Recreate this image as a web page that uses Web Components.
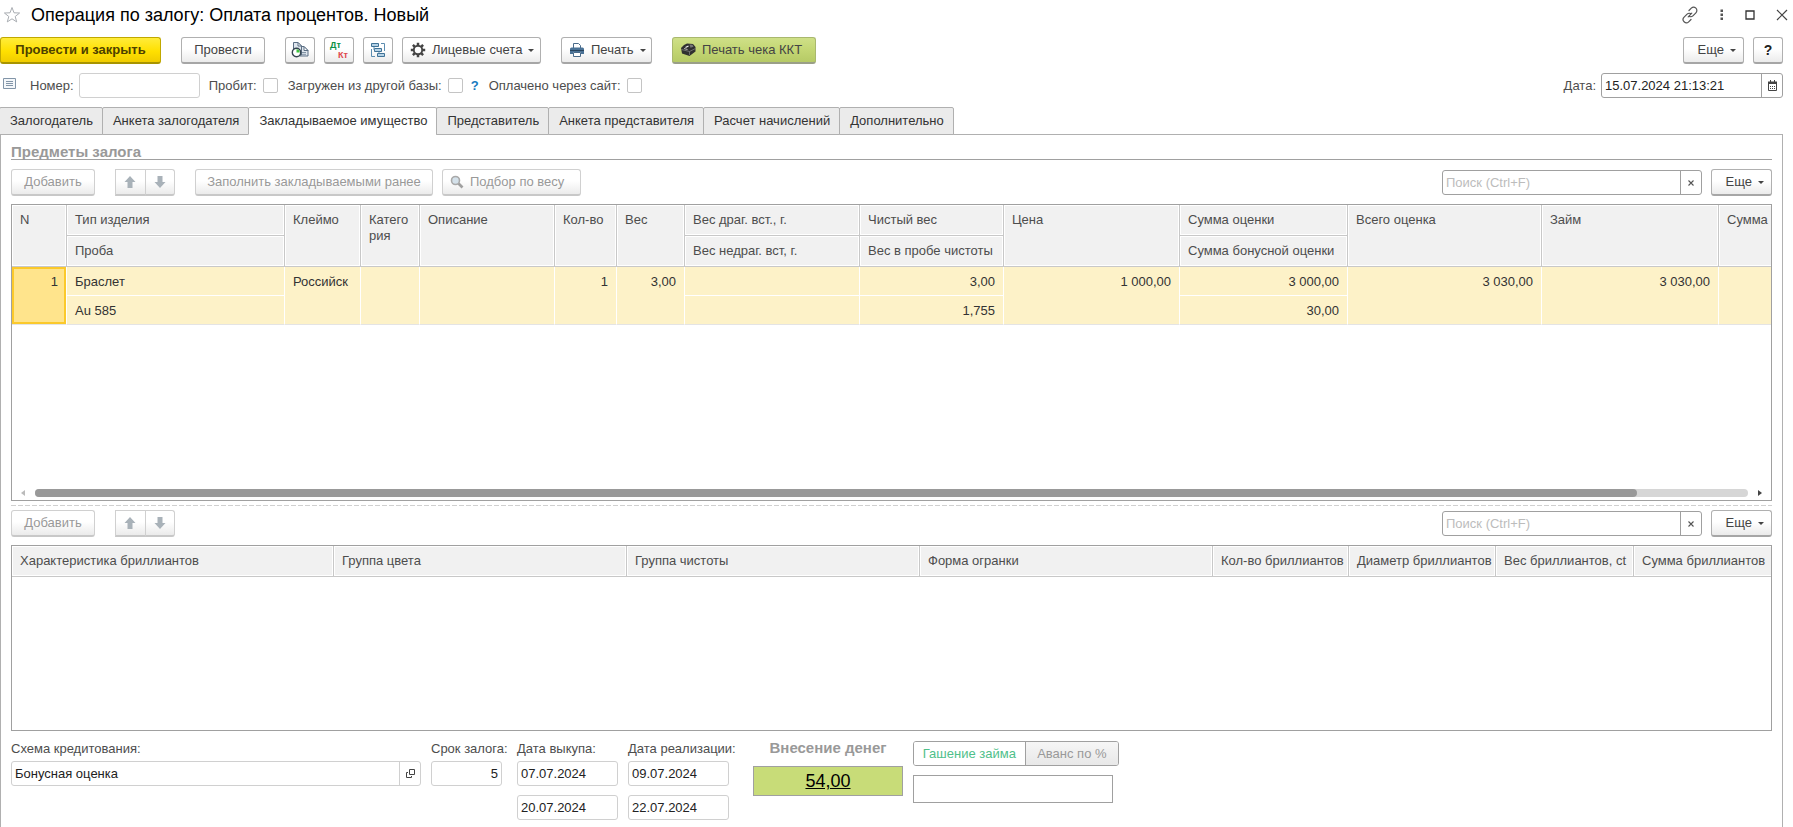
<!DOCTYPE html>
<html lang="ru">
<head>
<meta charset="utf-8">
<title>Операция по залогу: Оплата процентов. Новый</title>
<style>
html, body { margin: 0; height: 100%; }
body {
  font: 13px/16px "Liberation Sans", Arial, sans-serif;
  color: #333;
  background: #fff;
  --line: #a0a0a0;
  --soft: #d0d0d0;
  --label: #4d4d4d;
  --head: #f1f1f1;
  --sel: #fdf2c8;
}
</style>
</head>
<body>
<pledge-window></pledge-window>

<script>
const ICONS = {
  star: '<svg width="18" height="17" viewBox="0 0 18 17"><path d="M9 1.5l2 5.3 5.6.2-4.4 3.5 1.5 5.4L9 12.8l-4.7 3.1 1.5-5.4L1.4 7 7 6.800z" fill="none" stroke="#a9adb2" stroke-width="1"/></svg>',
  link: '<svg width="18" height="18" viewBox="0 0 18 18"><g fill="none" stroke="#555" stroke-width="1.200" stroke-linecap="round"><path d="M8 4.500l2.300-2.300a3.200 3.200 0 0 1 4.600 4.600l-3 3a3.200 3.200 0 0 1-3.600.6"/><path d="M10 13.500l-2.300 2.300a3.200 3.200 0 0 1-4.600-4.600l3-3a3.200 3.200 0 0 1 3.600-.6"/><path d="M7.200 10.800l3.600-3.600"/></g></svg>',
  dots: '<svg width="4" height="12" viewBox="0 0 4 12"><path d="M.5 0.500h2.500v2.500h-2.500zM.5 4.500h2.500v2.500h-2.500zM.5 8.500h2.500v2.500h-2.500z" fill="#555"/></svg>',
  max: '<svg width="10" height="10" viewBox="0 0 10 10"><path d="M1 1h8v8H1z" fill="none" stroke="#333" stroke-width="1.300"/></svg>',
  close: '<svg width="12" height="12" viewBox="0 0 12 12"><path d="M1 1l10 10M11 1L1 11" stroke="#444" stroke-width="1.200"/></svg>',
  report: '<svg width="18" height="18" viewBox="0 0 18 18"><path d="M8.500 5.500h4.500l4 4v5.500H8.500z" fill="#dfe6ee" stroke="#5b6f84"/><path d="M13 5.500v4h4z" fill="#fff" stroke="#5b6f84"/><path d="M11 11.500h4M11 13.300h4" stroke="#8294a5"/><path d="M2.500 1.500h4.500l3.500 3.500v9h-8z" fill="#dfe6ee" stroke="#5b6f84"/><path d="M7 1.500V5h3.500z" fill="#fff" stroke="#5b6f84"/><circle cx="5.500" cy="11.500" r="4.200" fill="#fff" stroke="#34434f" stroke-width="1.400"/><path d="M5.500 11.500V8.300A3.200 3.200 0 0 1 8.700 11.500z" fill="#3cc43c"/></svg>',
  flow: '<svg width="16" height="16" viewBox="0 0 16 16"><path d="M1.500 1.500h7v3h-7zM4.500 6.500h7v3h-7zM7.500 11.500h7v3h-7z" fill="#b5d2e6" stroke="#3f7296"/><path d="M4 5v3h.5M9 10v1.500M11 1.500h3.500V9M1.500 7v7.500H5" fill="none" stroke="#5c8db0"/></svg>',
  gear: '<svg width="16" height="16" viewBox="0 0 16 16"><circle cx="8" cy="8" r="4.200" fill="none" stroke="#444" stroke-width="1.900"/><path d="M8 .8v2.700M8 12.500v2.700M.8 8h2.700M12.500 8h2.700M2.900 2.900l1.900 1.900M11.200 11.200l1.900 1.900M2.900 13.100l1.900-1.900M11.200 4.800l1.900-1.900" stroke="#444" stroke-width="2.500"/></svg>',
  print: '<svg width="16" height="16" viewBox="0 0 16 16"><path d="M4.500 6V1.500h5l2 2V6" fill="#fff" stroke="#4a6b8a"/><path d="M2.500 5.500h11A1.500 1.500 0 0 1 15 7v5h-3v-2H4v2H1V7a1.500 1.500 0 0 1 1.500-1.500z" fill="#4a7296"/><path d="M1 8.500h14" stroke="#27435c"/><path d="M4.500 10.500h7v4h-7z" fill="#fff" stroke="#4a6b8a"/></svg>',
  kkt: '<svg width="16" height="14" viewBox="0 0 16 14"><path d="M1 5l3-3 3-1.500 6 .5 2.500 3v4.500L9.500 13 2 10.500z" fill="#303030"/><path d="M9.500 1.500l3 .3 1 2-3 1z" fill="#777"/><path d="M5.500 4.500l3-1.500" stroke="#f2f2f2" stroke-width="1.200"/><path d="M1.500 6.500l8 2V12M9.500 8.500l6-3" fill="none" stroke="#888" stroke-width=".7"/><path d="M4 5.500l3.500 1" stroke="#bbb"/></svg>',
  up: '<svg width="12" height="12" viewBox="0 0 12 12"><path d="M6 0l5.500 6H8.500v6h-5V6H.5z" fill="#a9b2b9"/></svg>',
  down: '<svg width="12" height="12" viewBox="0 0 12 12"><path d="M6 12l5.500-6H8.500V0h-5v6H.5z" fill="#a9b2b9"/></svg>',
  lens: '<svg width="14" height="14" viewBox="0 0 14 14"><path d="M8.500 8.500l4 4" stroke="#a0a0a0" stroke-width="2.600"/><circle cx="5.500" cy="5.500" r="4" fill="#d4e1ea" stroke="#a9a9a9" stroke-width="1.600"/></svg>',
  list: '<svg width="13" height="11" viewBox="0 0 13 11"><path d="M.5.500h12v10H.5z" fill="#f4f7fa" stroke="#8295a8"/><path d="M3 3.500h7M3 5.500h7M3 7.500h7" stroke="#8295a8"/></svg>',
  calendar: '<svg width="9" height="11" viewBox="0 0 9 11"><path d="M.5 2.500h8v8H.5z" fill="#fff" stroke="#444"/><path d="M0 1.500h9V4H0z" fill="#444"/><path d="M2.500 0v2M6.500 0v2" stroke="#444"/><path d="M2 6.500h5M2 8.500h5" stroke="#444" stroke-dasharray="1 1"/></svg>',
  open: '<svg width="9" height="9" viewBox="0 0 9 9"><path d="M3.500.5h5v5h-5z" fill="none" stroke="#444"/><path d="M2 3.500H.5v5h5V7" fill="none" stroke="#444"/></svg>',
  clear: '<svg width="6" height="6" viewBox="0 0 6 6"><path d="M.5.500l5 5M5.500.500l-5 5" stroke="#555" stroke-width="1.100"/></svg>',
  caret: '<svg width="6" height="3" viewBox="0 0 6 3"><path d="M0 0h6L3 3z" fill="#444"/></svg>'
};

class Base extends HTMLElement {
  connectedCallback() {
    if (this.shadowRoot) return;
    const root = this.attachShadow({ mode: 'open' });
    root.innerHTML = `<style>*{box-sizing:border-box}svg{display:block;flex:none}${this.css()}</style>${this.html()}`;
  }
  at(name, fallback = '') { return this.getAttribute(name) ?? fallback; }
  css() { return ''; }
  html() { return '<slot></slot>'; }
}

/* Command button: kind = main | green | icon, optional icon and menu caret */
class CmdButton extends Base {
  css() { return `
    :host { display: block; flex: none; }
    button { display: flex; align-items: center; justify-content: center; width: 100%; height: 27px; padding: 0 7px; gap: 6px;
      font: inherit; font-size: 13px; color: #444; white-space: nowrap; border: 1px solid #b0b0b0; border-bottom: 2px solid #a6a6a6;
      border-radius: 3px; background: linear-gradient(#fff 45%, #ebebeb); }
    :host([icon]) button:not(.icon) { justify-content: flex-start; }
    :host([menu]:not([icon])) button { justify-content: flex-end; }
    button:disabled { color: #999; border-color: #d0d0d0; border-bottom-color: #c8c8c8; }
    .main { font-weight: bold; color: #4d4000; border-color: #c0a800; border-bottom-color: #a89400; background: linear-gradient(#ffec3a, #ffe000 55%, #f0cc00); }
    .green { border-color: #a9b86e; border-bottom-color: #9a9f88; background: linear-gradient(#cfe088, #c3d673 50%, #b6ca66); }
    .icon { padding: 0; }
    .strong { font-weight: bold; font-size: 14px; color: #222; }
    .dk { display: grid; font: bold 9px/10px "Liberation Sans", sans-serif; text-align: left; width: 18px; }
    .dk i { font-style: normal; color: #0a9146; } .dk b { color: #e0474c; text-align: right; }`; }
  html() {
    const icon = this.at('icon'), kind = this.at('kind'), label = this.at('label');
    const body = kind === 'icon dt' ? '<span class="dk"><i>Дт</i><b>Кт</b></span>' : label ? '' : '<slot></slot>';
    return `<button type="button" class="${kind}" ${this.hasAttribute('disabled') ? 'disabled' : ''} ${label ? `aria-label="${label}"` : ''}>${icon ? ICONS[icon] : ''}${body}${this.hasAttribute('menu') ? `<span>${ICONS.caret}</span>` : ''}</button>`;
  }
}

/* Pair of joined buttons that move a row up or down */
class MoveButtons extends Base {
  css() { return `
    :host { display: flex; flex: none; width: 60px; }
    button { flex: 1; display: grid; place-items: center; height: 27px; padding: 0; border: 1px solid #d0d0d0; border-bottom: 2px solid #c8c8c8; background: linear-gradient(#fff 45%, #ebebeb); }
    button:first-child { border-radius: 3px 0 0 3px; } button:last-child { border-radius: 0 3px 3px 0; border-left: 0; }`; }
  html() { return `<button disabled aria-label="Вверх">${ICONS.up}</button><button disabled aria-label="Вниз">${ICONS.down}</button>`; }
}

/* Labelled text box with an optional trailing button */
class TextField extends Base {
  css() { return `
    :host { display: flex; align-items: center; gap: 5px; flex: none; }
    :host([stacked]) { flex-direction: column; align-items: stretch; gap: 4px; }
    label { color: var(--label); white-space: nowrap; }
    .box { display: flex; flex: 1; width: var(--w, 100%); height: 25px; border: 1px solid var(--bd, var(--soft)); border-radius: 3px; background: #fff; overflow: hidden; }
    :host([stacked]) .box { flex: none; }
    :host([strong]) .box { --bd: var(--line); }
    :host([tall]) .box { height: 28px; border-radius: 0; }
    input { flex: 1; min-width: 0; width: 0; border: 0; outline: 0; padding: 0 3px; font: inherit; color: #222; background: none; text-align: var(--align, left); }
    input::placeholder { color: #bcbcbc; opacity: 1; }
    button { display: grid; place-items: center; flex: none; width: 21px; padding: 0; border: 0; border-left: 1px solid var(--bd, var(--soft)); background: none; }`; }
  html() {
    const l = this.at('label'), b = this.at('button');
    return `${l ? `<label for="f">${l}</label>` : ''}<div class="box"><input id="f" type="text" value="${this.at('value')}" placeholder="${this.at('placeholder')}" ${l ? '' : `aria-label="${this.at('name', this.at('placeholder'))}"`}>
      ${b ? `<button type="button" aria-label="${this.at('action')}">${ICONS[b]}</button>` : ''}</div>`.replace(' placeholder=""', '');
  }
}

class CheckField extends Base {
  css() { return `
    :host { display: flex; align-items: center; gap: 6px; flex: none; }
    label { color: var(--label); white-space: nowrap; }
    input { appearance: none; width: 15px; height: 15px; margin: 0; border: 1px solid #c4c4c4; border-radius: 2px; background: #fff; }
    a { color: #1a7bbf; text-decoration: none; font-weight: bold; margin-left: 2px; }`; }
  html() { return `<label for="c">${this.at('label')}</label><input id="c" type="checkbox">${this.hasAttribute('help') ? '<a href="#help">?</a>' : ''}`; }
}

class TabBar extends Base {
  css() { return `
    :host { display: flex; position: relative; z-index: 1; margin-bottom: -1px; }
    button { height: 28px; padding: 0 9px 0 10px; margin-left: -1px; font: inherit; color: #333; border: 1px solid #b0b0b0; border-radius: 2px 2px 0 0; background: #ebebeb; white-space: nowrap; }
    button:first-child { margin-left: 0; }
    button[aria-selected=true] { background: #fff; border-bottom-color: #fff; }`; }
  html() { return `${this.at('tabs').split('|').map((t, i) => `<button type="button" role="tab" aria-selected="${i === +this.at('active')}">${t}</button>`).join('')}`; }
}

class CommandRow extends Base {
  css() { return `
    :host { display: flex; align-items: center; }
    .side { display: flex; align-items: center; gap: 9px; margin-left: auto; }`; }
  html() { return '<slot></slot><div class="side"><slot name="end"></slot></div>'; }
}

/* Horizontal scroll strip under a wide grid */
class ScrollStrip extends Base {
  css() { return `
    :host { display: flex; align-items: center; gap: 10px; height: 14px; padding: 0 9px; }
    .track { flex: 1; height: 8px; border-radius: 4px; background: #d6d6d6; }
    .thumb { width: 93.500%; height: 8px; border-radius: 4px; background: #999; }`; }
  html() { return `<svg width="4" height="6" viewBox="0 0 4 6"><path d="M4 0v6L0 3z" fill="#bbb"/></svg><div class="track"><div class="thumb"></div></div><svg width="4" height="6" viewBox="0 0 4 6"><path d="M0 0v6l4-3z" fill="#444"/></svg>`; }
}

const GRID_CSS = `
  :host { display: flex; flex-direction: column; border: 1px solid var(--line); overflow: hidden; background: #fff; }
  .view { flex: 1; overflow: hidden; min-height: 0; }
  table { border-collapse: separate; border-spacing: 0; table-layout: fixed; }
  th { height: 31px; padding: 7px 4px 0 8px; font-weight: normal; text-align: left; vertical-align: top; color: var(--label); background: var(--head);
    border-right: 1px solid #c8c8c8; border-bottom: 1px solid #c8c8c8; box-shadow: inset 0 0 0 1px #fff; white-space: nowrap; }
  td { height: 29px; padding: 7px 8px 0; vertical-align: top; background: var(--sel); border-right: 1px solid #fff; border-bottom: 1px solid #fff; white-space: nowrap; overflow: hidden; color: #333; }`;

class ItemsGrid extends Base {
  css() { return GRID_CSS + `
    table { width: 1884px; }
    .n { text-align: right; }
    .cur { background: #ffe48c; box-shadow: inset 0 0 0 2px #fbc92b; }
    td[rowspan], tr:last-child td { border-bottom-color: #e4e4e4; }`; }
  html() {
    const cols = [55, 218, 76, 59, 135, 62, 68, 175, 144, 176, 168, 194, 177];
    return `<div class="view"><table><colgroup>${cols.map(w => `<col style="width:${w}px">`).join('')}<col></colgroup>
      <thead><tr><th rowspan="2">N</th><th>Тип изделия</th><th rowspan="2">Клеймо</th><th rowspan="2">Катего<br>рия</th><th rowspan="2">Описание</th><th rowspan="2">Кол-во</th><th rowspan="2">Вес</th><th>Вес драг. вст., г.</th><th>Чистый вес</th><th rowspan="2">Цена</th><th>Сумма оценки</th><th rowspan="2">Всего оценка</th><th rowspan="2">Займ</th><th rowspan="2">Сумма</th></tr>
      <tr><th>Проба</th><th>Вес недраг. вст, г.</th><th>Вес в пробе чистоты</th><th>Сумма бонусной оценки</th></tr></thead>
      <tbody><tr><td rowspan="2" class="n cur">1</td><td>Браслет</td><td rowspan="2">Российск</td><td rowspan="2"></td><td rowspan="2"></td><td rowspan="2" class="n">1</td><td rowspan="2" class="n">3,00</td><td></td><td class="n">3,00</td><td rowspan="2" class="n">1 000,00</td><td class="n">3 000,00</td><td rowspan="2" class="n">3 030,00</td><td rowspan="2" class="n">3 030,00</td><td rowspan="2"></td></tr>
      <tr><td>Au 585</td><td></td><td class="n">1,755</td><td class="n">30,00</td></tr></tbody></table></div><scroll-strip></scroll-strip>`;
  }
}

class StonesGrid extends Base {
  css() { return GRID_CSS + `table { width: 100%; } th:last-child { border-right: 0; }`; }
  html() {
    const cols = [322, 293, 293, 293, 136, 147, 138, 138];
    const names = ['Характеристика бриллиантов', 'Группа цвета', 'Группа чистоты', 'Форма огранки', 'Кол-во бриллиантов', 'Диаметр бриллиантов', 'Вес бриллиантов, ct', 'Сумма бриллиантов'];
    return `<div class="view"><table><colgroup>${cols.map(w => `<col style="width:${w}px">`).join('')}</colgroup><thead><tr>${names.map(n => `<th>${n}</th>`).join('')}</tr></thead></table></div>`;
  }
}

class PaymentMode extends Base {
  css() { return `
    :host { display: flex; position: relative; height: 25px; border: 1px solid var(--line); border-radius: 3px; overflow: hidden; box-sizing: border-box; }
    input { position: absolute; opacity: 0; pointer-events: none; }
    label { display: grid; place-items: center; flex: 5 1 0; color: #999; background: linear-gradient(#f6f6f6, #e8e8e8); white-space: nowrap; }
    input:checked + label { color: #4fc08a; background: #fff; border-right: 1px solid var(--line); flex-grow: 6; }`; }
  html() { return `<input type="radio" name="m" id="a" checked><label for="a">Гашение займа</label><input type="radio" name="m" id="b"><label for="b">Аванс по %</label>`; }
}

class PledgeWindow extends Base {
  css() { return `
    :host { display: flex; flex-direction: column; min-height: 100vh; box-sizing: border-box; }
    header { display: flex; align-items: center; height: 29px; padding: 0 5px 0 3px; }
    h1 { margin: 0 auto 0 10px; font-size: 18px; line-height: 24px; font-weight: normal; color: #000; }
    .tools { display: flex; align-items: center; gap: 21px; }
    .tool { display: grid; place-items: center; padding: 0; border: 0; background: none; }
    .bar { margin: 8px 10px 0 0; }
    .g20 { margin-left: 20px; } .g9 { margin-left: 9px; }
    .fields { margin: 9px 10px 9px 0; }
    main { flex: 1; display: flex; flex-direction: column; margin-right: 10px; padding: 10px 10px 7px 10px; border: 1px solid #b0b0b0; border-bottom: 0; }
    h2 { margin: 0; font-size: 15px; line-height: 14px; font-weight: bold; color: #999; }
    .rule { border-bottom: 1px solid var(--line); margin-bottom: 9px; }
    items-grid { height: 297px; margin-top: 8px; }
    .split { height: 1px; background: repeating-linear-gradient(90deg, #d0d0d0 0 5px, #fff 5px 7px); margin: 4px 0; }
    stones-grid { flex: 1; min-height: 100px; margin-top: 8px; }
    .foot { display: flex; align-items: flex-start; margin-top: 10px; }
    .foot > * { flex: none; }
    .dates { display: grid; grid-template-columns: minmax(0, 1fr); gap: 9px; width: 101px; margin-right: 10px; }
    .money { width: 150px; margin-left: 14px; text-align: center; }
    .money a { display: block; margin-top: 11px; height: 30px; font-size: 18px; line-height: 28px; color: #000; background: #c8dc78; border: 1px solid #a0a0a0; box-sizing: border-box; }
    .money h2 { line-height: 14px; }
    .mode { width: 206px; margin-left: 10px; display: grid; gap: 9px; }`; }
  html() { return `
    <header>${ICONS.star}<h1>Операция по залогу: Оплата процентов. Новый</h1>
      <div class="tools"><button class="tool" aria-label="Ссылка">${ICONS.link}</button><button class="tool" aria-label="Меню">${ICONS.dots}</button><button class="tool" aria-label="Развернуть">${ICONS.max}</button><button class="tool" aria-label="Закрыть">${ICONS.close}</button></div></header>
    <command-row class="bar">
      <cmd-button kind="main" style="width:161px">Провести и закрыть</cmd-button>
      <cmd-button class="g20" style="width:84px">Провести</cmd-button>
      <cmd-button class="g20" kind="icon" icon="report" label="Отчеты" style="width:30px"></cmd-button>
      <cmd-button class="g9" kind="icon dt" style="width:30px"></cmd-button>
      <cmd-button class="g9" kind="icon" icon="flow" label="Структура подчиненности" style="width:30px"></cmd-button>
      <cmd-button class="g9" icon="gear" menu style="width:139px">Лицевые счета</cmd-button>
      <cmd-button class="g20" icon="print" menu style="width:91px">Печать</cmd-button>
      <cmd-button class="g20" kind="green" icon="kkt" style="width:144px">Печать чека ККТ</cmd-button>
      <cmd-button slot="end" menu style="width:61px">Еще</cmd-button>
      <cmd-button slot="end" kind="strong" style="width:30px">?</cmd-button>
    </command-row>
    <command-row class="fields">
      <span style="margin:0 14px 5px 3px">${ICONS.list}</span>
      <text-field label="Номер:" style="--w:121px"></text-field>
      <check-field label="Пробит:" style="margin-left:9px"></check-field>
      <check-field label="Загружен из другой базы:" help style="margin-left:10px"></check-field>
      <check-field label="Оплачено через сайт:" style="margin-left:10px"></check-field>
      <text-field slot="end" strong label="Дата:" value="15.07.2024 21:13:21" button="calendar" action="Выбрать дату" style="--w:182px"></text-field>
    </command-row>
    <tab-bar active="2" tabs="Залогодатель|Анкета залогодателя|Закладываемое имущество|Представитель|Анкета представителя|Расчет начислений|Дополнительно"></tab-bar>
    <main>
      <h2 class="rule">Предметы залога</h2>
      <command-row>
        <cmd-button disabled style="width:84px">Добавить</cmd-button>
        <move-buttons class="g20"></move-buttons>
        <cmd-button class="g20" disabled style="width:238px">Заполнить закладываемыми ранее</cmd-button>
        <cmd-button class="g9" disabled icon="lens" style="width:139px">Подбор по весу</cmd-button>
        <text-field slot="end" strong placeholder="Поиск (Ctrl+F)" button="clear" action="Очистить" style="--w:260px"></text-field>
        <cmd-button slot="end" menu style="width:61px">Еще</cmd-button>
      </command-row>
      <items-grid></items-grid>
      <div class="split"></div>
      <command-row>
        <cmd-button disabled style="width:84px">Добавить</cmd-button>
        <move-buttons class="g20"></move-buttons>
        <text-field slot="end" strong placeholder="Поиск (Ctrl+F)" button="clear" action="Очистить" style="--w:260px"></text-field>
        <cmd-button slot="end" menu style="width:61px">Еще</cmd-button>
      </command-row>
      <stones-grid></stones-grid>
      <div class="foot">
        <text-field stacked label="Схема кредитования:" value="Бонусная оценка" button="open" action="Открыть" style="width:410px;margin-right:10px"></text-field>
        <text-field stacked label="Срок залога:" value="5" style="width:71px;--align:right;margin-right:15px"></text-field>
        <div class="dates"><text-field stacked label="Дата выкупа:" value="07.07.2024"></text-field><text-field name="Дата выкупа, вторая" value="20.07.2024"></text-field></div>
        <div class="dates"><text-field stacked label="Дата реализации:" value="09.07.2024"></text-field><text-field name="Дата реализации, вторая" value="22.07.2024"></text-field></div>
        <div class="money"><h2>Внесение денег</h2><a href="#sum">54,00</a></div>
        <div class="mode"><payment-mode></payment-mode><text-field tall strong name="Сумма" style="width:200px"></text-field></div>
      </div>
    </main>`; }
}

for (const [tag, cls] of Object.entries({
  'cmd-button': CmdButton, 'move-buttons': MoveButtons, 'text-field': TextField, 'check-field': CheckField,
  'tab-bar': TabBar, 'command-row': CommandRow, 'scroll-strip': ScrollStrip, 'items-grid': ItemsGrid,
  'stones-grid': StonesGrid, 'payment-mode': PaymentMode, 'pledge-window': PledgeWindow
})) customElements.define(tag, cls);
</script>
</body>
</html>
